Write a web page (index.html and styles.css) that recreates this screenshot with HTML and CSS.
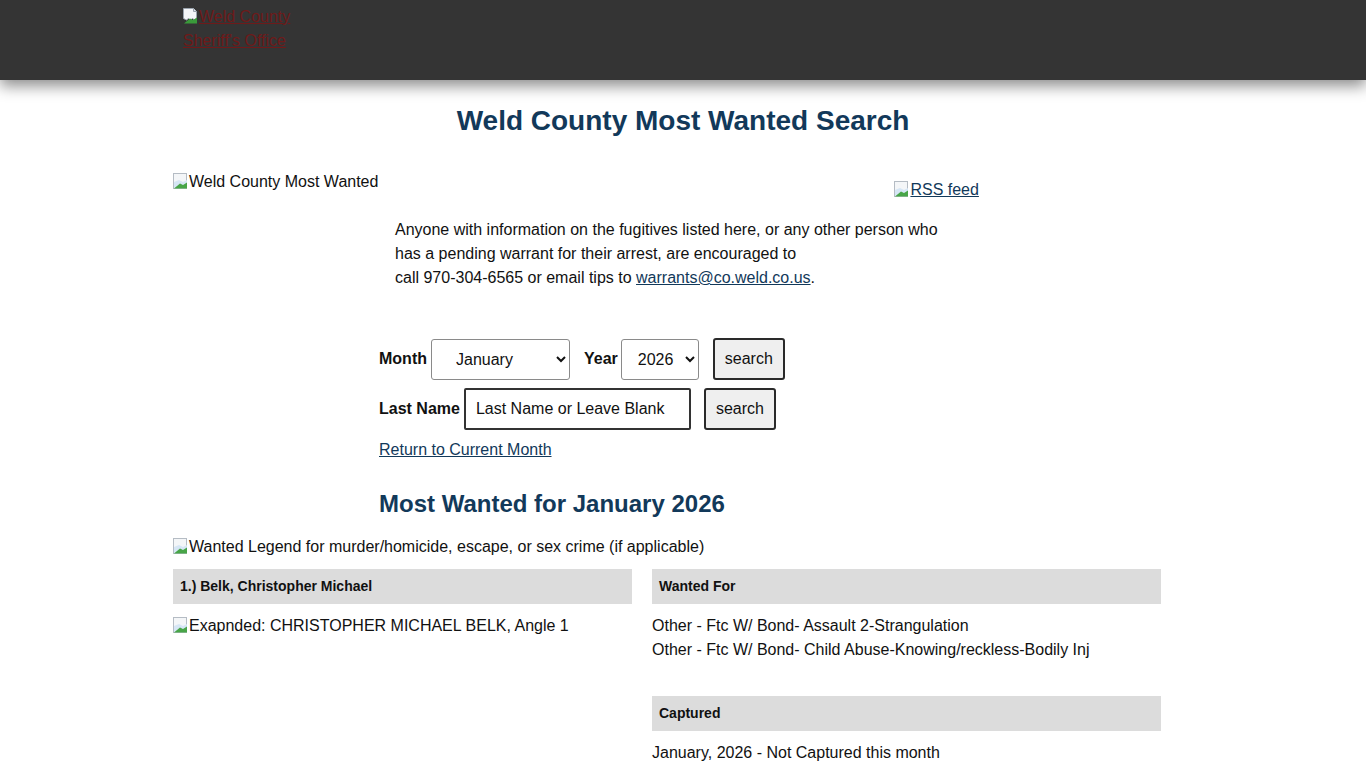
FILE: index.html
```html
<!DOCTYPE html>
<html lang="en">
<head>
<meta charset="utf-8">
<title>Weld County Most Wanted Search</title>
<link rel="stylesheet" href="styles.css">
</head>
<body>
<header class="site-header">
  <div class="header-inner">
    <a class="logo" href="#"><svg class="broken" viewBox="0 0 16 16" width="16" height="16"><path d="M0.5 0.5h10l3 3v7l-2 1.5-2-1.5-2 1.5-2-1.5-2 1.5-3-1.5z" fill="#f4f6f8" stroke="#9aa3ad"/><path d="M10.5 0.5v3h3" fill="#dde3ea" stroke="#9aa3ad"/><path d="M1 15.5 l6-5 3 1.5 4-2.5v6z" fill="#3a9a3a"/></svg>Weld County Sheriff's Office</a>
  </div>
</header>

<main class="page">
  <h1 class="title">Weld County Most Wanted Search</h1>

  <div class="intro-row">
    <span class="alt-img"><svg class="broken" viewBox="0 0 16 16" width="16" height="16"><rect x="0.5" y="0.5" width="13" height="15" fill="#f4f6f8" stroke="#b5bcc4"/><path d="M1 9 l5-2 4 2 4-2v8H1z" fill="#d6e6f5"/><path d="M1 15.5 l6-5 3 1.5 4-2.5v6z" fill="#48a548"/></svg>Weld County Most Wanted</span>
    <a class="rss" href="#"><svg class="broken" viewBox="0 0 16 16" width="16" height="16"><rect x="0.5" y="0.5" width="13" height="15" fill="#f4f6f8" stroke="#b5bcc4"/><path d="M1 9 l5-2 4 2 4-2v8H1z" fill="#d6e6f5"/><path d="M1 15.5 l6-5 3 1.5 4-2.5v6z" fill="#48a548"/></svg>RSS feed</a>
  </div>

  <p class="notice">Anyone with information on the fugitives listed here, or any other person who<br>has a pending warrant for their arrest, are encouraged to<br>call 970-304-6565 or email tips to <a href="#">warrants@co.weld.co.us</a>.</p>

  <form class="search">
    <div class="form-row">
      <label class="lbl">Month</label>
      <select class="sel sel-month"><option>January</option></select>
      <label class="lbl lbl-year">Year</label>
      <select class="sel sel-year"><option>2026</option></select>
      <button type="button" class="btn btn-first">search</button>
    </div>
    <div class="form-row">
      <label class="lbl">Last Name</label>
      <input class="name-input" type="text" value="Last Name or Leave Blank">
      <button type="button" class="btn btn-second">search</button>
    </div>
    <a class="return" href="#">Return to Current Month</a>
  </form>

  <h2 class="subtitle">Most Wanted for January 2026</h2>

  <div class="legend"><svg class="broken" viewBox="0 0 16 16" width="16" height="16"><rect x="0.5" y="0.5" width="13" height="15" fill="#f4f6f8" stroke="#b5bcc4"/><path d="M1 9 l5-2 4 2 4-2v8H1z" fill="#d6e6f5"/><path d="M1 15.5 l6-5 3 1.5 4-2.5v6z" fill="#48a548"/></svg>Wanted Legend for murder/homicide, escape, or sex crime (if applicable)</div>

  <section class="record">
    <div class="col">
      <div class="bar">1.) Belk, Christopher Michael</div>
      <div class="cell"><svg class="broken" viewBox="0 0 16 16" width="16" height="16"><rect x="0.5" y="0.5" width="13" height="15" fill="#f4f6f8" stroke="#b5bcc4"/><path d="M1 9 l5-2 4 2 4-2v8H1z" fill="#d6e6f5"/><path d="M1 15.5 l6-5 3 1.5 4-2.5v6z" fill="#48a548"/></svg>Exapnded: CHRISTOPHER MICHAEL BELK, Angle 1</div>
    </div>
    <div class="col">
      <div class="bar">Wanted For</div>
      <div class="cell">Other - Ftc W/ Bond- Assault 2-Strangulation<br>Other - Ftc W/ Bond- Child Abuse-Knowing/reckless-Bodily Inj</div>
      <div class="bar bar-gap">Captured</div>
      <div class="cell">January, 2026 - Not Captured this month</div>
    </div>
  </section>
</main>
</body>
</html>
```

FILE: styles.css
```css
* { box-sizing: border-box; }
html, body { margin: 0; padding: 0; }
body {
  font-family: "Liberation Sans", Arial, sans-serif;
  font-size: 16px;
  line-height: 24px;
  color: #111;
  background: #fff;
}
a { color: #12395a; }

.site-header {
  height: 80px;
  background: #343434;
  box-shadow: 0 6px 14px rgba(0,0,0,0.45);
}
.header-inner {
  width: 1020px;
  margin: 0 auto;
  padding: 5px 0 0 10px;
}
.logo {
  display: inline-block;
  width: 112px;
  color: #6e1a1a;
  font-size: 16px;
  line-height: 24px;
}
.broken { vertical-align: -2px; }

.page {
  width: 1020px;
  margin: 0 auto;
}
.title {
  margin: 25px 0 0;
  text-align: center;
  font-size: 28px;
  line-height: 32px;
  font-weight: bold;
  color: #12395a;
}
.intro-row {
  display: flex;
  margin-top: 33px;
}
.alt-img { display: inline-block; }
.rss {
  margin-left: 516px;
  margin-top: 8px;
}
.notice {
  margin: 16px 0 0 222px;
}
.notice a { color: #12395a; }

.search {
  margin: 48px 0 0 206px;
}
.form-row {
  display: flex;
  align-items: center;
  height: 42px;
  margin-bottom: 8px;
}
.lbl {
  font-weight: bold;
  margin-right: 4px;
}
.lbl-year { margin-left: 14px; margin-right: 3px; }
.sel {
  height: 41px;
  font-family: "Liberation Sans", Arial, sans-serif;
  font-size: 16px;
  color: #111;
  border: 1px solid #8a8a8a;
  border-radius: 3px;
  background: #fff;
  text-align: left;
}
.sel-month { width: 139px; padding-left: 20px; }
.sel-year { width: 78px; padding-left: 12px; }
.btn {
  height: 42px;
  font-family: "Liberation Sans", Arial, sans-serif;
  font-size: 16px;
  color: #111;
  background: #efefef;
  border: 2px solid #2a2a2a;
  border-radius: 3px;
  padding: 0 10px;
}
.btn-first { margin-left: 14px; width: 72px; }
.btn-second { margin-left: 13px; width: 72px; }
.name-input {
  width: 227px;
  height: 42px;
  font-family: "Liberation Sans", Arial, sans-serif;
  font-size: 16px;
  color: #111;
  border: 2px solid #333;
  border-radius: 2px;
  padding: 0 10px;
}
.return {
  display: inline-block;
  margin-top: -1px;
}

.subtitle {
  margin: 28px 0 0 206px;
  font-size: 24px;
  line-height: 28px;
  color: #12395a;
}
.legend { margin-top: 17px; }

.record {
  display: grid;
  grid-template-columns: 459px 509px;
  column-gap: 20px;
  margin-top: 10px;
}
.bar {
  height: 35px;
  background: #dcdcdc;
  font-size: 14px;
  font-weight: bold;
  line-height: 35px;
  padding-left: 7px;
}
.cell {
  padding-top: 10px;
}
.bar-gap { margin-top: 34px; }
```
